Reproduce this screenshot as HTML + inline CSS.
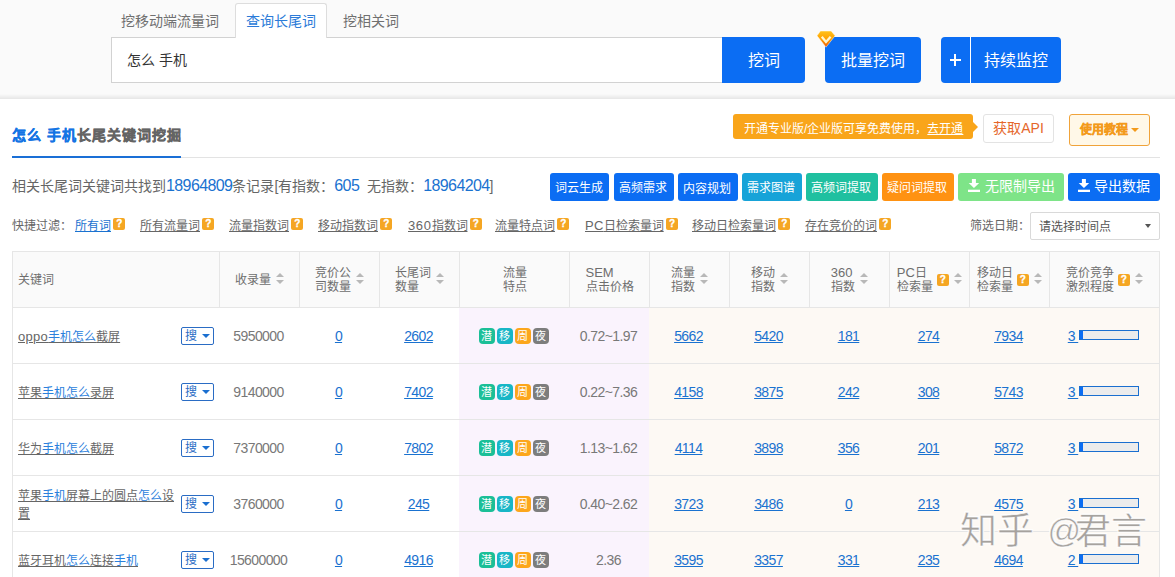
<!DOCTYPE html>
<html lang="zh-CN">
<head>
<meta charset="utf-8">
<style>
*{margin:0;padding:0;box-sizing:border-box;}
html,body{width:1175px;height:577px;overflow:hidden;background:#fff;}
body{font-family:"Liberation Sans",sans-serif;color:#333;position:relative;}
.abs{position:absolute;white-space:nowrap;}
#top{position:absolute;left:0;top:0;width:1175px;height:99px;background:#fafafa;}
#top .shadow{position:absolute;left:0;top:94px;width:1175px;height:5px;background:linear-gradient(#fafafa,#e6e6e6);}
.tab{position:absolute;top:12px;font-size:14px;color:#707070;line-height:18px;}
#tabact{position:absolute;z-index:2;left:235px;top:3px;width:92px;height:35px;background:#fff;border:1px solid #ddd;border-bottom:none;border-radius:3px 3px 0 0;}
#inp{position:absolute;left:111px;top:37px;width:612px;height:46px;background:#fff;border:1px solid #d2d2d2;}
.btn{position:absolute;color:#fff;text-align:center;white-space:nowrap;}
.bigbtn{top:37px;height:46px;background:#0b6df3;font-size:16px;line-height:47px;border-radius:4px;}

.t15{font-size:14px;font-weight:900;line-height:20px;letter-spacing:1px;-webkit-text-stroke:0.35px currentColor;}
#tip{position:absolute;left:733px;top:114px;width:240px;height:25px;background:#f9a51a;border-radius:3px;color:#fff;font-size:12px;line-height:30px;padding-left:11px;white-space:nowrap;}
#tip:after{content:"";position:absolute;right:-5px;top:7.5px;border-left:5px solid #f9a51a;border-top:5px solid transparent;border-bottom:5px solid transparent;}
#api{position:absolute;left:983px;top:114px;width:71px;height:29px;border:1px solid #e3e3e3;border-radius:3px;background:#fff;color:#e5672b;font-size:14px;line-height:27px;text-align:center;}
#jc{position:absolute;left:1069px;top:114px;width:81px;height:32px;border:1px solid #f0a33a;border-radius:3px;background:#fff8e8;color:#f39a1b;font-size:12px;font-weight:bold;line-height:30px;padding-left:10px;-webkit-text-stroke:0.3px currentColor;}
.sbtn{position:absolute;top:173px;height:28px;border-radius:3px;color:#fff;font-size:12px;line-height:31px;padding-right:2px;text-align:center;white-space:nowrap;}
.q{display:inline-block;width:12px;height:12px;background:#f5a623;border-radius:2px;color:#fff;font-size:10px;font-weight:bold;line-height:12px;text-align:center;vertical-align:top;position:relative;top:-0.5px;margin-left:-1px;-webkit-text-stroke:0.3px #fff;}
.num{color:#1a72d0;font-size:16px;letter-spacing:-0.6px;}
.flt{position:absolute;top:218px;font-size:12px;line-height:16px;color:#666;white-space:nowrap;}
.flt u{text-decoration:underline;}

.hc{position:absolute;top:252px;height:55px;display:flex;align-items:center;justify-content:center;font-size:12px;color:#6e6e6e;padding-right:0;}
.ht{line-height:14px;white-space:nowrap;}
.lt{font-size:13px;}
.hq{display:inline-block;width:12px;height:12px;background:#f5a623;border-radius:2px;color:#fff;font-size:10px;font-weight:bold;line-height:12px;text-align:center;margin-left:4px;-webkit-text-stroke:0.3px #fff;}
.sort{display:inline-block;width:8px;height:12px;position:relative;margin-left:5.5px;top:-1px;}
.sort i{position:absolute;left:-0.3px;width:0;height:0;border-left:4.2px solid transparent;border-right:4.2px solid transparent;}
.sort .up{top:0;border-bottom:4.5px solid #b8b8b8;}
.sort .dn{top:7px;border-top:4.5px solid #b8b8b8;}
.kw{position:absolute;left:13px;width:206px;}
.kwt{position:absolute;left:5px;top:50%;transform:translateY(calc(-50% + 1px));width:160px;font-size:12px;line-height:18px;color:#666;}
.kwt u{text-decoration:underline;}
.kwt b{font-weight:normal;color:#2a80dc;}
.sou{position:absolute;left:181px;width:33px;height:18px;border:1px solid #2a6cc4;border-radius:2px;color:#2a6cc4;font-size:12px;line-height:16px;padding-left:3px;background:#fff;}
.sou i{position:absolute;left:20px;top:5.5px;width:0;height:0;border-top:4.5px solid #1a6fd0;border-left:4.2px solid transparent;border-right:4.2px solid transparent;}
.bc{position:absolute;display:flex;align-items:center;justify-content:center;font-size:14px;letter-spacing:-0.6px;padding-right:2px;}
.g{color:#787878;}
.lk{color:#1a72d0;text-decoration:underline;}
.tg{display:inline-block;width:16px;height:16px;border-radius:4px;color:#fff;font-size:11px;line-height:17px;text-align:center;margin:0 1px;position:relative;left:0;letter-spacing:0;}
.t1{background:#1bbf97;}.t2{background:#18b6c6;}.t3{background:#fca61c;}.t4{background:#7d7d7d;}
.bar{display:inline-block;margin-left:1px;width:60px;height:10px;border:1px solid #1a6fd0;background:#ececec;position:relative;top:-1px;letter-spacing:0;}
.bar i{position:absolute;left:0;top:0;width:3px;height:8px;background:#0b6df3;}
</style>
</head>
<body>
<div id="top">
  <div class="shadow"></div>
  <div class="tab" style="left:121px;">挖移动端流量词</div>
  <div id="tabact"></div>
  <div class="tab" style="left:246px;color:#2b7bd8;z-index:3;">查询长尾词</div>
  <div class="tab" style="left:343px;">挖相关词</div>
  <div id="inp"></div>
  <div class="abs" style="left:127px;top:51px;font-size:14px;line-height:18px;color:#333;">怎么 手机</div>
  <div class="btn bigbtn" style="left:722px;width:83px;border-radius:0 4px 4px 0;">挖词</div>
  <div class="btn bigbtn" style="left:825px;width:96px;">批量挖词</div>
  <svg class="abs" style="left:816px;top:30px;" width="20" height="19" viewBox="0 0 20 19"><defs><linearGradient id="gd" x1="0" y1="0" x2="0" y2="1"><stop offset="0" stop-color="#ffc21a"/><stop offset="0.5" stop-color="#ffa000"/><stop offset="1" stop-color="#f05500"/></linearGradient></defs><polygon points="4.4,1 15.2,1 19.1,5.8 10,17.2 1,5.8" fill="url(#gd)" stroke="#fff" stroke-opacity="0.6" stroke-width="0.8" stroke-linejoin="round"/><polyline points="5.8,6.8 10,12 14.6,6.8" fill="none" stroke="#fff6d0" stroke-width="2.3"/></svg>
  <div class="btn bigbtn" style="left:941px;width:120px;"><span style="position:absolute;left:8.5px;top:22px;width:11.5px;height:2px;background:#fff;"></span><span style="position:absolute;left:13px;top:17px;width:2.2px;height:12px;background:#fff;"></span><span style="position:absolute;left:29px;top:0;width:1px;height:46px;background:#fff;"></span><span style="position:absolute;left:30px;top:0;width:90px;text-align:center;">持续监控</span></div>
</div>
<div id="content">
  <div class="abs t15" style="left:12px;top:125px;"><span style="color:#1474e4;">怎么 手机</span><span style="color:#646464;">长尾关键词挖掘</span></div>
  <div class="abs" style="left:12px;top:157px;width:1148px;height:1px;background:#e3e3e3;"></div>
  <div class="abs" style="left:12px;top:156px;width:169px;height:2px;background:#1a6fd6;"></div>
  <div id="tip">开通专业版/企业版可享免费使用，<u>去开通</u></div>
  <div id="api">获取API</div>
  <div id="jc">使用教程 <span style="display:inline-block;width:0;height:0;border-top:4px solid #f39a1b;border-left:4px solid transparent;border-right:4px solid transparent;vertical-align:middle;margin-left:0px;position:relative;top:-1px;"></span></div>

  <div class="abs" style="left:12px;top:177px;font-size:14px;line-height:18px;color:#666;">相关长尾词关键词共找到<span class="num">18964809</span>条记录[有指数：<span class="num">605</span><span style="margin-left:8px;">无指数：</span><span class="num">18964204</span>]</div>
  <div class="sbtn" style="left:550px;width:59px;background:#0b6df3;">词云生成</div>
  <div class="sbtn" style="left:614px;width:60px;background:#0b6df3;">高频需求</div>
  <div class="sbtn" style="left:678px;width:60px;background:#0b6df3;line-height:33px;">内容规划</div>
  <div class="sbtn" style="left:742px;width:60px;background:#17a3d8;">需求图谱</div>
  <div class="sbtn" style="left:806px;width:72px;background:#1fc0a0;">高频词提取</div>
  <div class="sbtn" style="left:882px;width:72px;background:#ff9212;">疑问词提取</div>
  <div class="sbtn" style="left:958px;width:106px;background:#7ee488;font-size:14px;line-height:26px;padding-left:17px;padding-right:0;"><svg style="position:absolute;left:10px;top:5px;" width="12" height="14" viewBox="0 0 12 14"><rect x="3.9" y="1" width="4" height="4.5" fill="#fff"/><polygon points="0.7,5 11.2,5 5.95,9.9" fill="#fff"/><rect x="0" y="11.7" width="12" height="2.3" fill="#fff"/></svg>无限制导出</div>
  <div class="sbtn" style="left:1068px;width:92px;background:#0b6df3;font-size:14px;line-height:26px;padding-left:15px;padding-right:0;"><svg style="position:absolute;left:10px;top:5px;" width="12" height="14" viewBox="0 0 12 14"><rect x="3.9" y="1" width="4" height="4.5" fill="#fff"/><polygon points="0.7,5 11.2,5 5.95,9.9" fill="#fff"/><rect x="0" y="11.7" width="12" height="2.3" fill="#fff"/></svg>导出数据</div>

  <div class="flt" style="left:12px;">快捷过滤：</div>
  <div class="flt" style="left:75px;"><u style="color:#1a72d0;">所有词</u> <span class="q">?</span></div>
  <div class="flt" style="left:140px;"><u>所有流量词</u> <span class="q">?</span></div>
  <div class="flt" style="left:229px;"><u>流量指数词</u> <span class="q">?</span></div>
  <div class="flt" style="left:318px;"><u>移动指数词</u> <span class="q">?</span></div>
  <div class="flt" style="left:408px;"><u><span style="font-size:13px;letter-spacing:0.6px;line-height:10px;">360</span>指数词</u> <span class="q">?</span></div>
  <div class="flt" style="left:495px;"><u>流量特点词</u> <span class="q">?</span></div>
  <div class="flt" style="left:585px;"><u><span style="font-size:13px;letter-spacing:0.3px;line-height:10px;">PC</span>日检索量词</u> <span class="q">?</span></div>
  <div class="flt" style="left:692px;"><u>移动日检索量词</u> <span class="q">?</span></div>
  <div class="flt" style="left:805px;"><u>存在竞价的词</u> <span class="q">?</span></div>
  <div class="flt" style="left:970px;">筛选日期：</div>
  <div class="abs" style="left:1030px;top:212px;width:130px;height:28px;border:1px solid #d9d9d9;border-radius:2px;background:#fff;font-size:12px;line-height:28px;color:#555;padding-left:8px;">请选择时间点<span style="position:absolute;right:8px;top:11px;width:0;height:0;border-top:4px solid #555;border-left:3.6px solid transparent;border-right:3.6px solid transparent;"></span></div>
<div id="table">
<div class="abs" style="left:12px;top:251px;width:1148px;height:56px;background:#fafafa;"></div>
<div class="abs" style="left:459px;top:307px;width:190px;height:270px;background:#faf3fd;"></div>
<div class="abs" style="left:649px;top:307px;width:510px;height:270px;background:#fdf9f4;"></div>
<div class="abs" style="left:12px;top:251px;width:1148px;height:1px;background:#e6e6e6;"></div>
<div class="abs" style="left:12px;top:307px;width:1148px;height:1px;background:#e6e6e6;"></div>
<div class="abs" style="left:12px;top:363px;width:1148px;height:1px;background:#e6e6e6;"></div>
<div class="abs" style="left:12px;top:419px;width:1148px;height:1px;background:#e6e6e6;"></div>
<div class="abs" style="left:12px;top:475px;width:1148px;height:1px;background:#e6e6e6;"></div>
<div class="abs" style="left:12px;top:531px;width:1148px;height:1px;background:#e6e6e6;"></div>
<div class="abs" style="left:12px;top:587px;width:1148px;height:1px;background:#e6e6e6;"></div>
<div class="abs" style="left:12px;top:251px;width:1px;height:326px;background:#e6e6e6;"></div>
<div class="abs" style="left:1159px;top:251px;width:1px;height:326px;background:#e6e6e6;"></div>
<div class="abs" style="left:219px;top:251px;width:1px;height:56px;background:#e6e6e6;"></div>
<div class="abs" style="left:299px;top:251px;width:1px;height:56px;background:#e6e6e6;"></div>
<div class="abs" style="left:379px;top:251px;width:1px;height:56px;background:#e6e6e6;"></div>
<div class="abs" style="left:459px;top:251px;width:1px;height:56px;background:#e6e6e6;"></div>
<div class="abs" style="left:569px;top:251px;width:1px;height:56px;background:#e6e6e6;"></div>
<div class="abs" style="left:649px;top:251px;width:1px;height:56px;background:#e6e6e6;"></div>
<div class="abs" style="left:729px;top:251px;width:1px;height:56px;background:#e6e6e6;"></div>
<div class="abs" style="left:809px;top:251px;width:1px;height:56px;background:#e6e6e6;"></div>
<div class="abs" style="left:889px;top:251px;width:1px;height:56px;background:#e6e6e6;"></div>
<div class="abs" style="left:969px;top:251px;width:1px;height:56px;background:#e6e6e6;"></div>
<div class="abs" style="left:1049px;top:251px;width:1px;height:56px;background:#e6e6e6;"></div>
<div class="hc" style="left:13px;width:206px;justify-content:flex-start;padding-left:5px;"><span class="ht">关键词</span></div>
<div class="hc" style="left:220px;width:79px;"><span class="ht">收录量</span><span class="sort"><i class="up"></i><i class="dn"></i></span></div>
<div class="hc" style="left:300px;width:79px;"><span class="ht">竞价公<br>司数量</span><span class="sort"><i class="up"></i><i class="dn"></i></span></div>
<div class="hc" style="left:380px;width:79px;"><span class="ht">长尾词<br>数量</span><span class="sort"><i class="up"></i><i class="dn"></i></span></div>
<div class="hc" style="left:460px;width:109px;"><span class="ht">流量<br>特点</span></div>
<div class="hc" style="left:570px;width:79px;"><span class="ht"><span class="lt">SEM</span><br>点击价格</span></div>
<div class="hc" style="left:650px;width:79px;"><span class="ht">流量<br>指数</span><span class="sort"><i class="up"></i><i class="dn"></i></span></div>
<div class="hc" style="left:730px;width:79px;"><span class="ht">移动<br>指数</span><span class="sort"><i class="up"></i><i class="dn"></i></span></div>
<div class="hc" style="left:810px;width:79px;"><span class="ht"><span class="lt">360</span><br>指数</span><span class="sort"><i class="up"></i><i class="dn"></i></span></div>
<div class="hc" style="left:890px;width:79px;"><span class="ht"><span class="lt">PC</span>日<br>检索量</span><span class="hq">?</span><span class="sort"><i class="up"></i><i class="dn"></i></span></div>
<div class="hc" style="left:970px;width:79px;"><span class="ht">移动日<br>检索量</span><span class="hq">?</span><span class="sort"><i class="up"></i><i class="dn"></i></span></div>
<div class="hc" style="left:1050px;width:109px;"><span class="ht">竞价竞争<br>激烈程度</span><span class="hq">?</span><span class="sort"><i class="up"></i><i class="dn"></i></span></div>
<div class="kw" style="top:308px;height:55px;"><div class="kwt"><u><span style="font-size:13px;letter-spacing:0.3px;">oppo</span><b>手机怎么</b>截屏</u></div></div>
<div class="sou" style="margin-top:-1px;top:328px;">搜<i></i></div>
<div class="bc" style="left:220px;top:308px;width:79px;height:55px;"><span class="g">5950000</span></div>
<div class="bc" style="left:300px;top:308px;width:79px;height:55px;"><u class="lk">0</u></div>
<div class="bc" style="left:380px;top:308px;width:79px;height:55px;"><u class="lk">2602</u></div>
<div class="bc" style="left:460px;top:308px;width:109px;height:55px;"><span class="tg t1">潜</span><span class="tg t2">移</span><span class="tg t3">周</span><span class="tg t4">夜</span></div>
<div class="bc" style="left:570px;top:308px;width:79px;height:55px;"><span class="g">0.72~1.97</span></div>
<div class="bc" style="left:650px;top:308px;width:79px;height:55px;"><u class="lk">5662</u></div>
<div class="bc" style="left:730px;top:308px;width:79px;height:55px;"><u class="lk">5420</u></div>
<div class="bc" style="left:810px;top:308px;width:79px;height:55px;"><u class="lk">181</u></div>
<div class="bc" style="left:890px;top:308px;width:79px;height:55px;"><u class="lk">274</u></div>
<div class="bc" style="left:970px;top:308px;width:79px;height:55px;"><u class="lk">7934</u></div>
<div class="bc" style="left:1050px;top:308px;width:109px;height:55px;"><u class="lk">3&nbsp;</u><span class="bar"><i></i></span></div>
<div class="kw" style="top:364px;height:55px;"><div class="kwt"><u>苹果<b>手机怎么</b>录屏</u></div></div>
<div class="sou" style="margin-top:-1px;top:384px;">搜<i></i></div>
<div class="bc" style="left:220px;top:364px;width:79px;height:55px;"><span class="g">9140000</span></div>
<div class="bc" style="left:300px;top:364px;width:79px;height:55px;"><u class="lk">0</u></div>
<div class="bc" style="left:380px;top:364px;width:79px;height:55px;"><u class="lk">7402</u></div>
<div class="bc" style="left:460px;top:364px;width:109px;height:55px;"><span class="tg t1">潜</span><span class="tg t2">移</span><span class="tg t3">周</span><span class="tg t4">夜</span></div>
<div class="bc" style="left:570px;top:364px;width:79px;height:55px;"><span class="g">0.22~7.36</span></div>
<div class="bc" style="left:650px;top:364px;width:79px;height:55px;"><u class="lk">4158</u></div>
<div class="bc" style="left:730px;top:364px;width:79px;height:55px;"><u class="lk">3875</u></div>
<div class="bc" style="left:810px;top:364px;width:79px;height:55px;"><u class="lk">242</u></div>
<div class="bc" style="left:890px;top:364px;width:79px;height:55px;"><u class="lk">308</u></div>
<div class="bc" style="left:970px;top:364px;width:79px;height:55px;"><u class="lk">5743</u></div>
<div class="bc" style="left:1050px;top:364px;width:109px;height:55px;"><u class="lk">3&nbsp;</u><span class="bar"><i></i></span></div>
<div class="kw" style="top:420px;height:55px;"><div class="kwt"><u>华为<b>手机怎么</b>截屏</u></div></div>
<div class="sou" style="margin-top:-1px;top:440px;">搜<i></i></div>
<div class="bc" style="left:220px;top:420px;width:79px;height:55px;"><span class="g">7370000</span></div>
<div class="bc" style="left:300px;top:420px;width:79px;height:55px;"><u class="lk">0</u></div>
<div class="bc" style="left:380px;top:420px;width:79px;height:55px;"><u class="lk">7802</u></div>
<div class="bc" style="left:460px;top:420px;width:109px;height:55px;"><span class="tg t1">潜</span><span class="tg t2">移</span><span class="tg t3">周</span><span class="tg t4">夜</span></div>
<div class="bc" style="left:570px;top:420px;width:79px;height:55px;"><span class="g">1.13~1.62</span></div>
<div class="bc" style="left:650px;top:420px;width:79px;height:55px;"><u class="lk">4114</u></div>
<div class="bc" style="left:730px;top:420px;width:79px;height:55px;"><u class="lk">3898</u></div>
<div class="bc" style="left:810px;top:420px;width:79px;height:55px;"><u class="lk">356</u></div>
<div class="bc" style="left:890px;top:420px;width:79px;height:55px;"><u class="lk">201</u></div>
<div class="bc" style="left:970px;top:420px;width:79px;height:55px;"><u class="lk">5872</u></div>
<div class="bc" style="left:1050px;top:420px;width:109px;height:55px;"><u class="lk">3&nbsp;</u><span class="bar"><i></i></span></div>
<div class="kw" style="top:476px;height:55px;"><div class="kwt"><u>苹果<b>手机</b>屏幕上的圆点<b>怎么</b>设置</u></div></div>
<div class="sou" style="margin-top:-1px;top:496px;">搜<i></i></div>
<div class="bc" style="left:220px;top:476px;width:79px;height:55px;"><span class="g">3760000</span></div>
<div class="bc" style="left:300px;top:476px;width:79px;height:55px;"><u class="lk">0</u></div>
<div class="bc" style="left:380px;top:476px;width:79px;height:55px;"><u class="lk">245</u></div>
<div class="bc" style="left:460px;top:476px;width:109px;height:55px;"><span class="tg t1">潜</span><span class="tg t2">移</span><span class="tg t3">周</span><span class="tg t4">夜</span></div>
<div class="bc" style="left:570px;top:476px;width:79px;height:55px;"><span class="g">0.40~2.62</span></div>
<div class="bc" style="left:650px;top:476px;width:79px;height:55px;"><u class="lk">3723</u></div>
<div class="bc" style="left:730px;top:476px;width:79px;height:55px;"><u class="lk">3486</u></div>
<div class="bc" style="left:810px;top:476px;width:79px;height:55px;"><u class="lk">0</u></div>
<div class="bc" style="left:890px;top:476px;width:79px;height:55px;"><u class="lk">213</u></div>
<div class="bc" style="left:970px;top:476px;width:79px;height:55px;"><u class="lk">4575</u></div>
<div class="bc" style="left:1050px;top:476px;width:109px;height:55px;"><u class="lk">3&nbsp;</u><span class="bar"><i></i></span></div>
<div class="kw" style="top:532px;height:55px;"><div class="kwt"><u>蓝牙耳机<b>怎么</b>连接<b>手机</b></u></div></div>
<div class="sou" style="margin-top:-1px;top:552px;">搜<i></i></div>
<div class="bc" style="left:220px;top:532px;width:79px;height:55px;"><span class="g">15600000</span></div>
<div class="bc" style="left:300px;top:532px;width:79px;height:55px;"><u class="lk">0</u></div>
<div class="bc" style="left:380px;top:532px;width:79px;height:55px;"><u class="lk">4916</u></div>
<div class="bc" style="left:460px;top:532px;width:109px;height:55px;"><span class="tg t1">潜</span><span class="tg t2">移</span><span class="tg t3">周</span><span class="tg t4">夜</span></div>
<div class="bc" style="left:570px;top:532px;width:79px;height:55px;"><span class="g">2.36</span></div>
<div class="bc" style="left:650px;top:532px;width:79px;height:55px;"><u class="lk">3595</u></div>
<div class="bc" style="left:730px;top:532px;width:79px;height:55px;"><u class="lk">3357</u></div>
<div class="bc" style="left:810px;top:532px;width:79px;height:55px;"><u class="lk">331</u></div>
<div class="bc" style="left:890px;top:532px;width:79px;height:55px;"><u class="lk">235</u></div>
<div class="bc" style="left:970px;top:532px;width:79px;height:55px;"><u class="lk">4694</u></div>
<div class="bc" style="left:1050px;top:532px;width:109px;height:55px;"><u class="lk">2&nbsp;</u><span class="bar"><i></i></span></div>
</div>
<div class="abs" style="left:960px;top:508px;font-size:37px;line-height:48px;color:#a6a29e;font-weight:normal;-webkit-text-stroke:0.5px #fff;text-shadow:-1px -1px 0 rgba(255,255,255,.9),1px -1px 0 rgba(255,255,255,.9),-1px 1px 0 rgba(255,255,255,.6);">知乎<span style="position:absolute;left:87px;top:-1px;font-family:'Liberation Sans',sans-serif;font-size:33px;font-style:italic;">@</span><span style="position:absolute;left:115px;top:0;font-size:36px;">君言</span></div>
</div>
</body>
</html>
